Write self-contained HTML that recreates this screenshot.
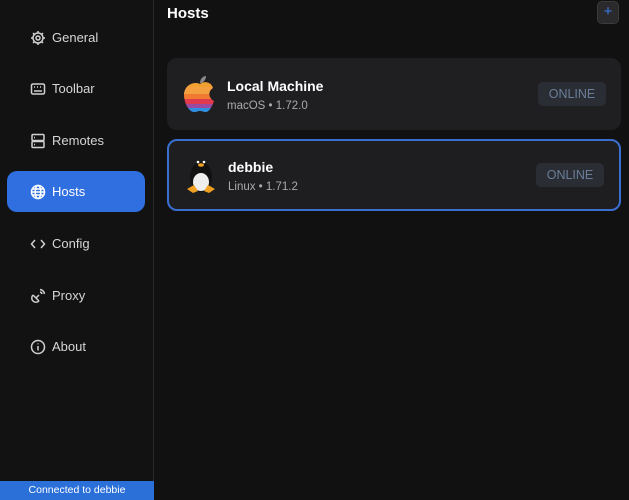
<!DOCTYPE html>
<html><head><style>
*{margin:0;padding:0;box-sizing:border-box}
body{width:629px;height:500px;background:#111112;font-family:"Liberation Sans",sans-serif;position:relative;overflow:hidden;color:#ddd}
.side{position:absolute;left:0;top:0;width:154px;height:500px;background:#121213;border-right:1px solid #2a2a2c}
.item{position:absolute;left:7px;width:138px;height:41px;border-radius:10px;display:flex;align-items:center;padding-left:23px;font-size:13px;color:#d6d6d6}
.item svg{width:16px;height:16px;margin-right:6px;fill:none;stroke:#d0d0d0;stroke-width:1.5}
.item.act{background:#2f6fe0;color:#fff}
.item.act svg{stroke:#fff}
.status{position:absolute;left:0;bottom:0;width:154px;height:19px;background:#2b6fd8;color:#fff;font-size:10.5px;text-align:center;line-height:19px}
h1{position:absolute;left:167px;top:5px;font-size:15px;color:#fff;font-weight:bold}
.plus{position:absolute;left:597px;top:1px;width:22px;height:23px;border-radius:5px;background:#2a2a2c;border:1px solid #3a3a3c;color:#3b7ee8;font-size:15px;text-align:center;line-height:20px}
.card{position:absolute;left:167px;width:454px;height:72px;border-radius:10px;background:#1f1f21}
.card.sel{border:2px solid #3a6fd0;background:#1e1e20}
.name{position:absolute;left:60px;top:20px;font-size:14px;color:#fff;font-weight:bold}
.sub{position:absolute;left:60px;top:42px;font-size:11.5px;color:#aaa}
.badge{position:absolute;right:15px;top:24px;width:68px;height:24px;border-radius:5px;background:#2a2d33;color:#6b7e99;font-size:12.5px;text-align:center;line-height:24px}
</style></head><body>
<div class="side">
<div class="item" style="top:17px"><svg viewBox="0 0 16 16"><circle cx="8" cy="8" r="5"/><circle cx="8" cy="8" r="2"/><path d="M8 1v2M8 13v2M1 8h2M13 8h2M3 3l1.5 1.5M11.5 11.5L13 13M3 13l1.5-1.5M11.5 4.5L13 3"/></svg>General</div>
<div class="item" style="top:68px"><svg viewBox="0 0 16 16"><rect x="1.5" y="3" width="13" height="10" rx="1.5"/><path d="M4 6h1M7 6h1M10 6h1M4 10h8"/></svg>Toolbar</div>
<div class="item" style="top:120px"><svg viewBox="0 0 16 16"><rect x="2" y="1.5" width="12" height="6" rx="1"/><rect x="2" y="8.5" width="12" height="6" rx="1"/><path d="M4 4.5h1M4 11.5h1"/></svg>Remotes</div>
<div class="item act" style="top:171px"><svg viewBox="0 0 16 16"><circle cx="8" cy="8" r="6.5"/><ellipse cx="8" cy="8" rx="2.8" ry="6.5"/><path d="M1.5 8h13M2.5 5h11M2.5 11h11"/></svg>Hosts</div>
<div class="item" style="top:223px"><svg viewBox="0 0 16 16"><path d="M5 4L1.5 8 5 12M11 4l3.5 4-3.5 4"/></svg>Config</div>
<div class="item" style="top:275px"><svg viewBox="0 0 16 16"><path d="M3 7l6 6M3 7a4 4 0 0 0 6 6M6 10l3-3M10 4a2.5 2.5 0 0 1 2 2M10 1.5a5 5 0 0 1 4.5 4.5"/></svg>Proxy</div>
<div class="item" style="top:326px"><svg viewBox="0 0 16 16"><circle cx="8" cy="8" r="6.5"/><path d="M8 7v4.5M8 4.5v.8"/></svg>About</div>
<div class="status">Connected to debbie</div>
</div>
<h1>Hosts</h1>
<div class="plus">+</div>
<div class="card" style="top:58px">
<svg style="position:absolute;left:16px;top:16px" width="34" height="40" viewBox="0 0 34 40">
<defs><clipPath id="ap"><path d="M17 10c3-3 11-3 13 4-5 3-5 10 1 13-2 6-5 11-8 11-3 0-4-1-6-1s-3 1-6 1C6 38 1 29 1 21 1 11 11 7 17 10z"/></clipPath></defs>
<path d="M17 9c0-4 3-7 6-7 0 4-3 7-6 7z" fill="#8a8a8a"/>
<g clip-path="url(#ap)"><rect x="0" y="5" width="34" height="8" fill="#f0a030"/><rect x="0" y="13" width="34" height="7" fill="#f5a040"/><rect x="0" y="20" width="34" height="5" fill="#f07a30"/><rect x="0" y="25" width="34" height="5" fill="#e03a4e"/><rect x="0" y="30" width="34" height="4" fill="#9a4aa0"/><rect x="0" y="34" width="34" height="6" fill="#2f8fe0"/></g>
</svg>
<div class="name">Local Machine</div><div class="sub">macOS • 1.72.0</div><div class="badge">ONLINE</div></div>
<div class="card sel" style="top:139px">
<svg style="position:absolute;left:16px;top:14px" width="32" height="40" viewBox="0 0 32 40">
<ellipse cx="16" cy="22" rx="11" ry="15" fill="#111"/><ellipse cx="16" cy="27" rx="8" ry="9" fill="#eee"/><ellipse cx="16" cy="10" rx="3" ry="1.8" fill="#f0a020"/><circle cx="13" cy="7" r="1.3" fill="#fff"/><circle cx="19" cy="7" r="1.3" fill="#fff"/>
<path d="M2 34l7-4 4 6-5 2zM30 34l-7-4-4 6 5 2z" fill="#f0a020"/></svg>
<div class="name" style="left:59px;top:18px">debbie</div><div class="sub" style="left:59px;top:40px">Linux • 1.71.2</div><div class="badge" style="top:22px">ONLINE</div></div>
</body></html>
